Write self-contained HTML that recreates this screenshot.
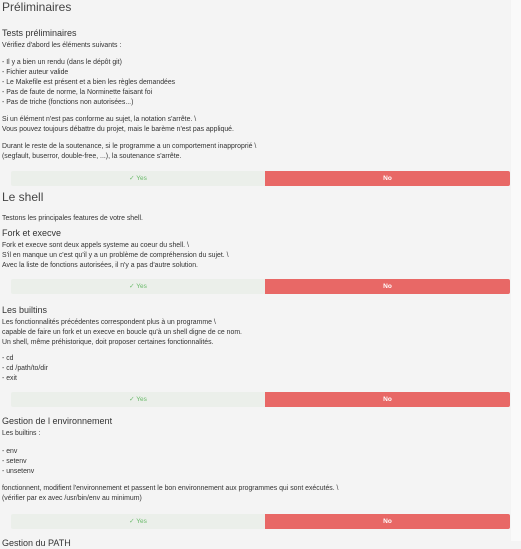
<!DOCTYPE html>
<html><head><meta charset="utf-8"><style>
body{margin:0;width:521px;height:541px;overflow:hidden;background:#f4f4f4;font-family:"Liberation Sans",sans-serif;color:#333;position:relative}
.t{position:absolute;left:2px;font-size:6.9px;line-height:10px;white-space:nowrap}
.h1{position:absolute;left:2px;font-size:12px;color:#444;line-height:16px}
.h2{position:absolute;left:2px;font-size:9px;color:#333;line-height:12px}
.y{position:absolute;left:11px;width:254px;height:15px;background:#ebefea;color:#6aba6a;font-size:6.5px;line-height:15px;text-align:center;border-radius:2px 0 0 2px}
.n{position:absolute;left:265px;width:245px;height:15px;background:#e86866;color:#fff;font-size:6.5px;font-weight:bold;line-height:15px;text-align:center;border-radius:0 2px 2px 0}
.r{position:absolute;right:0;top:0;width:10px;height:541px;background:#fafafa}
</style></head><body>
<div class="r"></div>
<div class="h1" style="top:-1px">Préliminaires</div>
<div class="h2" style="top:27px">Tests préliminaires</div>
<div class="t" style="top:41px">Vérifiez d'abord les éléments suivants :</div>
<div class="t" style="top:58px">- Il y a bien un rendu (dans le dépôt git)<br>- Fichier auteur valide<br>- Le Makefile est présent et a bien les règles demandées<br>- Pas de faute de norme, la Norminette faisant foi<br>- Pas de triche (fonctions non autorisées...)</div>
<div class="t" style="top:115px">Si un élément n'est pas conforme au sujet, la notation s'arrête. \<br>Vous pouvez toujours débattre du projet, mais le barème n'est pas appliqué.</div>
<div class="t" style="top:142px">Durant le reste de la soutenance, si le programme a un comportement inapproprié \<br>(segfault, buserror, double-free, ...), la soutenance s'arrête.</div>
<div class="y" style="top:171px">✓ Yes</div><div class="n" style="top:171px">No</div>
<div class="h1" style="top:189px">Le shell</div>
<div class="t" style="top:214px">Testons les principales features de votre shell.</div>
<div class="h2" style="top:227px">Fork et execve</div>
<div class="t" style="top:241px">Fork et execve sont deux appels systeme au coeur du shell. \<br>S'il en manque un c'est qu'il y a un problème de compréhension du sujet. \<br>Avec la liste de fonctions autorisées, il n'y a pas d'autre solution.</div>
<div class="y" style="top:279px">✓ Yes</div><div class="n" style="top:279px">No</div>
<div class="h2" style="top:304px">Les builtins</div>
<div class="t" style="top:318px">Les fonctionnalités précédentes correspondent plus à un programme \<br>capable de faire un fork et un execve en boucle qu'à un shell digne de ce nom.<br>Un shell, même préhistorique, doit proposer certaines fonctionnalités.</div>
<div class="t" style="top:354px">- cd<br>- cd /path/to/dir<br>- exit</div>
<div class="y" style="top:392px">✓ Yes</div><div class="n" style="top:392px">No</div>
<div class="h2" style="top:415px">Gestion de l environnement</div>
<div class="t" style="top:429px">Les builtins :</div>
<div class="t" style="top:447px">- env<br>- setenv<br>- unsetenv</div>
<div class="t" style="top:484px">fonctionnent, modifient l'environnement et passent le bon environnement aux programmes qui sont exécutés. \<br>(vérifier par ex avec /usr/bin/env au minimum)</div>
<div class="y" style="top:514px">✓ Yes</div><div class="n" style="top:514px">No</div>
<div class="h2" style="top:537px">Gestion du PATH</div>
</body></html>
